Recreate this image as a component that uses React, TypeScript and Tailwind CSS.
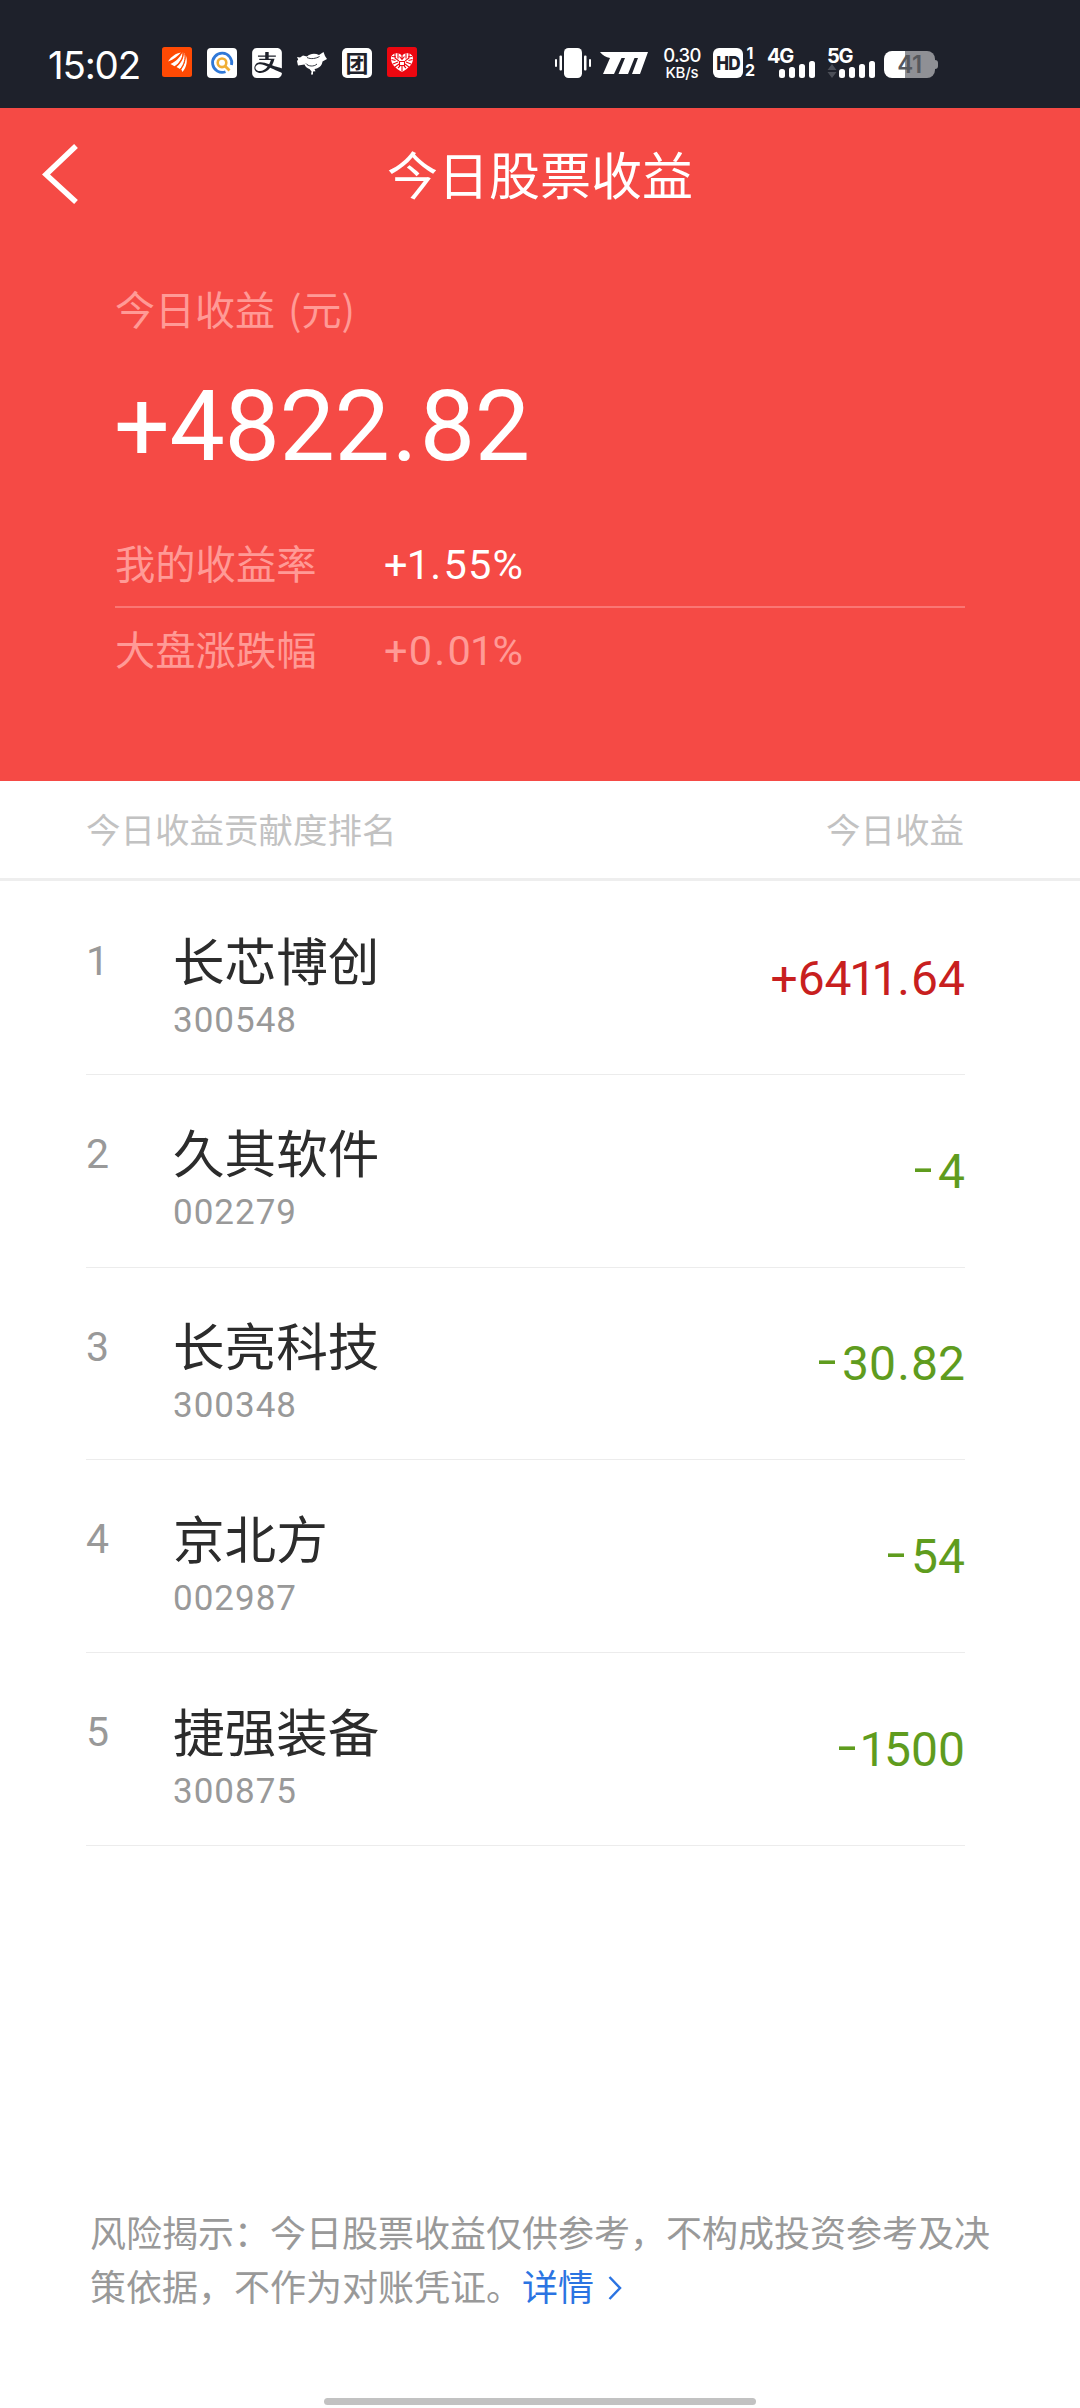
import React from "react";
import { SiAlipay } from "react-icons/si";

const CJK = "font-['Noto_Sans_CJK_SC',sans-serif]";
const NUM = "font-['Roboto','Noto_Sans_CJK_SC',sans-serif]";

type Holding = { rank: number; name: string; code: string; profit: string };

const holdings: Holding[] = [
  { rank: 1, name: "长芯博创", code: "300548", profit: "+6411.64" },
  { rank: 2, name: "久其软件", code: "002279", profit: "-4" },
  { rank: 3, name: "长亮科技", code: "300348", profit: "-30.82" },
  { rank: 4, name: "京北方", code: "002987", profit: "-54" },
  { rank: 5, name: "捷强装备", code: "300875", profit: "-1500" },
];

// Narrow "1", roomy decimal point and a wide, raised minus sign.
function Figures({ value }: { value: string }) {
  return (
    <>
      {value.split("").map((char, i) => {
        if (char === "1") return <span key={i} className="-mx-[0.05em]">1</span>;
        if (char === ".") return <span key={i} className="mx-[0.025em]">.</span>;
        if (char === "-")
          return (
            <span key={i} className="mr-[0.12em] inline-block origin-right -translate-y-[0.07em] scale-x-140">
              -
            </span>
          );
        return <React.Fragment key={i}>{char}</React.Fragment>;
      })}
    </>
  );
}

function NotificationIcons() {
  return (
    <div className="flex items-start gap-[15px]">
      <svg className="-mt-px size-[30px]" viewBox="0 0 30 30">
        <rect width="30" height="30" rx="2.5" fill="#ff4a04" />
        <path d="M6 14.500C9 9.500 14 6.200 19 5.500C16 9 12 12.500 6 14.500Z" fill="#fff" />
        <path d="M8.500 17C14 14.500 18.500 10 20.300 5.300C21.500 11 17 16.500 12.500 19.300Z" fill="#fff" />
        <path d="M14.500 20C19.500 16 22 11 21.800 5.500C24.700 10 22.500 17 18 22Z" fill="#fff" />
        <path d="M19.300 22.500C23 17.500 24.300 12.500 23.500 7.500C26 13 24.800 20 20.500 25Z" fill="#fff" />
        <path d="M7 15.800C12 13.500 17 10 19.800 5.500M13.200 19.800C18 16 21 11 21.200 5.800M18.400 22.200C22.500 17 23.300 12 22.900 7" fill="none" stroke="#ff4a04" strokeWidth="1" />
      </svg>
      <svg className="size-[30px]" viewBox="0 0 30 30">
        <rect width="30" height="30" rx="4" fill="#fff" />
        <path d="M24.500 17A9.600 9.600 0 1 0 18.500 23.800" fill="none" stroke="#2f78d8" strokeWidth="2.800" />
        <circle cx="15" cy="14.800" r="4.300" fill="none" stroke="#f0ae35" strokeWidth="2.600" />
        <path d="M18 18l4.500 4.500" stroke="#f0ae35" strokeWidth="2.800" />
      </svg>
      <SiAlipay className="size-[30px] text-white" />
      <svg className="size-[30px]" viewBox="0 0 30 30" fill="#fff">
        <path d="M0 9l3 .5L6 7.500l4 1C13 5.500 18 5 22 7L26.500 4l1.500 4 2 3-4.500 2.500C25 18 21.500 20.500 17.500 21l1 2.200-2.500.3v3h-2l.6-3L12.500 21C10 20 8.300 18.500 7.500 16.500L1 17.500 0 13l1.200-1.500Z" />
        <path d="M10 9.500C14 11.500 19 10.500 22.500 8.500M9 15.500C11 18.500 17 19 20 16" fill="none" stroke="#1e212b" strokeWidth=".9" />
      </svg>
      <div className="flex size-[30px] items-center justify-center rounded-[5px] bg-white">
        <span className={`${CJK} -mt-[3px] text-[23px] leading-[24px] font-bold text-[#1e212b]`}>团</span>
      </div>
      <svg className="-mt-px size-[30px]" viewBox="0 0 30 30">
        <rect width="30" height="30" rx="2.500" fill="#ec0710" />
        <path d="M15 25C8 21 3.800 16.500 4 11.500C4.300 6.500 10.500 4.500 15 8.500C19.500 4.500 25.700 6.500 26 11.500C26.200 16.500 22 21 15 25Z" fill="#fff" />
        <path
          d="M15 8v4M12.500 9.500l2.500 3 2.500-3M8 6v5l4 3M22 6v5l-4 3M4.500 12.500l4 1M25.500 12.500l-4 1M6 17l5-2M24 17l-5-2M8 20l4-3M22 20l-4-3M12.500 14.500h5v4h-5zM15 18.500v6M11 21l2-2M19 21l-2-2M5 9.500l4 .5M25 9.500l-4 .5M11 6.500v5M19 6.500v5"
          fill="none"
          stroke="#ec0710"
          strokeWidth="1.100"
        />
      </svg>
    </div>
  );
}

function SignalBars() {
  return (
    <div className="flex items-end gap-[4px]">
      <span className="h-[9px] w-[6px] rounded-[2.500px] bg-white" />
      <span className="h-[11px] w-[6px] rounded-[2.500px] bg-white" />
      <span className="h-[14px] w-[6px] rounded-[2.500px] bg-white" />
      <span className="h-[17px] w-[6px] rounded-[2.500px] bg-white" />
    </div>
  );
}

function Network({ label, arrows }: { label: string; arrows?: boolean }) {
  return (
    <div className="relative flex h-[30px] w-[48px] items-end justify-end">
      <span className="absolute -top-[2px] left-0 font-['Inter',sans-serif] text-[20px] leading-[20px] font-bold tracking-[-1.200px] text-white">
        {label}
      </span>
      {arrows && (
        <svg className="absolute bottom-0 left-0 h-[14px] w-[10px]" viewBox="0 0 10 14" fill="#4b4e57">
          <path d="M5 0l4.500 6h-9zM5 14l4.500-6h-9z" />
        </svg>
      )}
      <SignalBars />
    </div>
  );
}

function StatusBar() {
  return (
    <div className="flex h-[108px] items-start bg-[#1e212b] pt-[48px] text-white">
      <span className="-mt-[3px] ml-[48px] w-[114px] font-['Inter',sans-serif] text-[38.500px] leading-[40px] tracking-[-1.200px] whitespace-nowrap">
        15:02
      </span>
      <NotificationIcons />
      <svg className="ml-[138px] h-[30px] w-[36px]" viewBox="0 0 36 30" fill="#fff">
        <rect x="9" width="18" height="30" rx="4.500" />
        <rect y="11" width="2" height="8" rx="1" />
        <rect x="4.500" y="7.500" width="2.500" height="15" rx="1" />
        <rect x="29" y="7.500" width="2.500" height="15" rx="1" />
        <rect x="34" y="11" width="2" height="8" rx="1" />
      </svg>
      <svg className="mt-[4px] ml-[9px] h-[22px] w-[48px]" viewBox="0 0 48 22" fill="#fff">
        <path d="M0 0H48L40 22H32L38 6H34.500L28 22H18.500L25 6H21.500L14 22H3L10 6C6 5.500 2.500 3 0 0Z" />
      </svg>
      <div className="-mt-[3px] ml-[15px] flex w-[38px] flex-col items-center font-['Inter',sans-serif] whitespace-nowrap">
        <span className="text-[18.500px] leading-[20px] font-medium tracking-[-0.600px]">0.30</span>
        <span className="text-[15px] leading-[15px] font-medium tracking-[-0.200px]">KB/s</span>
      </div>
      <div className="ml-[12px] flex size-[30px] items-center justify-center rounded-[6px] bg-white">
        <span className="scale-x-90 font-['Inter',sans-serif] text-[19px] leading-none font-extrabold tracking-[-1px] text-[#1e212b]">
          HD
        </span>
      </div>
      <div className="-mt-[3px] ml-[1px] flex w-[12px] flex-col items-center font-['Inter',sans-serif] text-[16px] leading-[17px] font-bold">
        <span>1</span>
        <span>2</span>
      </div>
      <div className="ml-[11px]">
        <Network label="4G" />
      </div>
      <div className="ml-[12px]">
        <Network label="5G" arrows />
      </div>
      <div className="mt-[3px] ml-[9px] flex items-center">
        <div className="flex h-[27px] w-[51px] items-center justify-center rounded-[8px] bg-linear-to-r from-white from-41% to-[#8f9095] to-41%">
          <span className="font-['Inter',sans-serif] text-[24px] leading-none font-semibold tracking-[-0.500px] text-[#56585d]">
            41
          </span>
        </div>
        <span className="h-[9px] w-[3px] rounded-r-[3px] bg-[#8f9095]" />
      </div>
    </div>
  );
}

function RateRow({ label, value, muted }: { label: string; value: string; muted?: boolean }) {
  return (
    <div className="flex h-[84px] items-center">
      <span className={`${CJK} -mt-[4px] w-[269px] text-[40.300px] leading-[44px] text-[#ff9a96]`}>{label}</span>
      <span
        className={`${NUM} pt-px text-[41.500px] leading-[44px] tracking-[1.200px] ${muted ? "text-[#ff9a96]" : "text-white"}`}
      >
        <Figures value={value} />
      </span>
    </div>
  );
}

function Summary() {
  return (
    <section className="h-[673px] bg-[#f54a45] text-white">
      <header className="grid h-[134px] grid-cols-[120px_1fr_120px] items-center">
        <svg className="-mt-[2px] ml-[42px] h-[60px] w-[38px]" viewBox="0 0 38 60" fill="none" stroke="#fff" strokeWidth="5.500">
          <path d="M34 2L4 30.500L34 58" />
        </svg>
        <h1 className={`${CJK} -mt-[4px] text-center text-[51px] leading-[60px]`}>今日股票收益</h1>
      </header>
      <div className="mr-[115px] ml-[115px] pt-[36px]">
        <p className={`${CJK} text-[40px] leading-[60px] text-[#ff9a96]`}>
          今日收益<span className="ml-[4px]"> (元)</span>
        </p>
        <p className={`${NUM} mt-[39px] -ml-px text-[98.500px] leading-[100px] font-normal tracking-[-0.400px]`}>
          <Figures value="+4822.82" />
        </p>
        <div className="mt-[45px]">
          <RateRow label="我的收益率" value="+1.55%" />
          <div className="h-[2px] bg-[#fa7673]" />
          <RateRow label="大盘涨跌幅" value="+0.01%" muted />
        </div>
      </div>
    </section>
  );
}

function HoldingRow({ rank, name, code, profit }: Holding) {
  return (
    <li className="flex h-[192.800px] border-b border-[#ececec]">
      <span className={`${NUM} w-[87px] pt-[58px] text-[41px] leading-[42px] text-[#999]`}>{rank}</span>
      <div className="flex-1 pt-[50.500px]">
        <p className={`${CJK} text-[51.600px] leading-[52px] text-[#2c2c2c]`}>{name}</p>
        <p className={`${NUM} mt-[18px] text-[35px] leading-[36px] tracking-[1px] text-[#999]`}>{code}</p>
      </div>
      <span
        className={`${NUM} self-center pt-[2px] text-[48px] leading-[50px] ${
          profit.startsWith("+") ? "text-[#c81f1f]" : "text-[#5f9c1e]"
        }`}
      >
        <Figures value={profit} />
      </span>
    </li>
  );
}

export default function App() {
  return (
    <div className="flex h-[2408px] w-[1080px] flex-col overflow-hidden bg-white">
      <StatusBar />
      <Summary />
      <div
        className={`${CJK} flex h-[100px] items-center justify-between border-b-[3px] border-[#eee] pr-[116px] pb-[4px] pl-[86px] text-[34.500px] leading-[40px] text-[#c2c2c2]`}
      >
        <span>今日收益贡献度排名</span>
        <span>今日收益</span>
      </div>
      <ul className="mr-[115px] ml-[86px] pt-px">
        {holdings.map((h) => (
          <HoldingRow key={h.code} {...h} />
        ))}
      </ul>
      <footer className="mt-auto flex flex-col">
        <p className={`${CJK} mb-[86px] pr-[80px] pl-[90px] text-[36px] leading-[54px] text-[#999]`}>
          风险揭示：今日股票收益仅供参考，不构成投资参考及决
          <br />
          策依据，不作为对账凭证。
          <span className="text-[#2b74e2]">
            详情
            <svg
              className="ml-[14px] inline h-[24px] w-[14px] align-[1px]"
              viewBox="0 0 14 24"
              fill="none"
              stroke="currentColor"
              strokeWidth="2.500"
            >
              <path d="M1.500 1l10.500 11L1.500 23" />
            </svg>
          </span>
        </p>
        <div className="mb-[3px] h-[7px] w-[432px] self-center rounded-full bg-[#c2c2c2]" />
      </footer>
    </div>
  );
}
